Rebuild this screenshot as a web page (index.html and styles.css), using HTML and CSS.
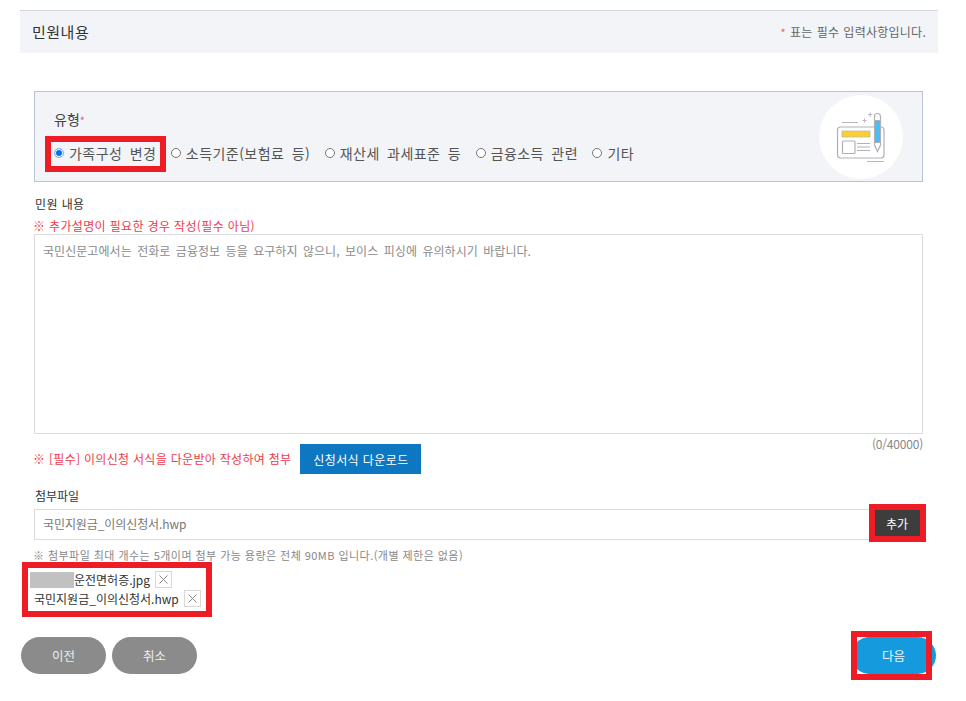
FILE: index.html
```html
<!DOCTYPE html>
<html lang="ko">
<head>
<meta charset="utf-8">
<title>민원내용</title>
<link rel="stylesheet" href="styles.css">
</head>
<body>
<div class="page">
  <header class="head">
    <h2 class="head-title">민원내용</h2>
    <p class="head-note"><span class="req">*</span> 표는 필수 입력사항입니다.</p>
  </header>
  <main class="content">
    <section class="type-box">
      <div class="type-main">
        <div class="type-label">유형<span class="req">*</span></div>
        <div class="radios">
          <label class="radio"><span class="dot on"></span>가족구성 변경</label>
          <label class="radio"><span class="dot"></span>소득기준(보험료 등)</label>
          <label class="radio"><span class="dot"></span>재산세 과세표준 등</label>
          <label class="radio"><span class="dot"></span>금융소득 관련</label>
          <label class="radio"><span class="dot"></span>기타</label>
        </div>
      </div>
      <div class="type-icon">
        <svg width="84" height="84" viewBox="819 95 84 84" fill="none">
          <path d="M842 122.500h16" stroke="#b5b8bd"/>
          <path d="M837.500 130a3 3 0 0 1 3-3h40.500a3 3 0 0 1 3 3v25a3 3 0 0 1-3 3h-40.500a3 3 0 0 1-3-3z" stroke="#aeb1b6" stroke-width="1.200"/>
          <rect x="842" y="131" width="28" height="6" fill="#fbcf33" stroke="#b8b6a8" stroke-width=".7"/>
          <rect x="842.500" y="141" width="12.500" height="12.500" rx="1" stroke="#aeb1b6" stroke-width="1.200"/>
          <path d="M857 143.500h13M857 147h13M857 150.500h13" stroke="#aeb1b6" stroke-width="1.100"/>
          <path d="M862.500 120.500h4M864.500 118.500v4M868 114.500h4.500M870.200 112.500v4.500" stroke="#b5b8bd"/>
          <path d="M874 116a3.500 3.500 0 0 1 7 0v29.500l-3.500 6.500-3.500-6.500z" fill="#fff"/>
          <rect x="874.500" y="120.500" width="6" height="22" fill="#4bbdf4"/>
          <path d="M874.500 119v-2.500a3 3 0 0 1 6 0V145l-3 6.500-3-6.500z" stroke="#aeb1b6" stroke-width="1.200"/>
          <path d="M874.500 120.500h6M874.500 142.500h6" stroke="#aeb1b6"/>
          <path d="M867 161.500h17" stroke="#b5b8bd"/>
        </svg>
      </div>
    </section>

    <div class="field-label complaint-label">민원 내용</div>
    <p class="warn warn-small">※ 추가설명이 필요한 경우 작성(필수 아님)</p>
    <div class="textarea">국민신문고에서는 전화로 금융정보 등을 요구하지 않으니, 보이스 피싱에 유의하시기 바랍니다.</div>
    <div class="counter">(0/40000)</div>

    <div class="download-row">
      <p class="warn">※ [필수] 이의신청 서식을 다운받아 작성하여 첨부</p>
      <button class="download-btn" type="button">신청서식 다운로드</button>
    </div>

    <div class="field-label attach-label">첨부파일</div>
    <div class="attach-row">
      <div class="attach-input">국민지원금_이의신청서.hwp</div>
      <button class="add-btn" type="button">추가</button>
    </div>
    <p class="hint">※ 첨부파일 최대 개수는 5개이며 첨부 가능 용량은 전체 90MB 입니다.(개별 제한은 없음)</p>

    <ul class="files">
      <li class="file file-masked"><span class="mask"></span><span class="file-name">운전면허증.jpg</span><button class="remove" type="button" aria-label="삭제"><svg width="15" height="15" viewBox="0 0 15 15"><path d="M3.500 3.500l8 8M11.500 3.500l-8 8" stroke="#8a8a8a" fill="none"/></svg></button></li>
      <li class="file"><span class="file-name">국민지원금_이의신청서.hwp</span><button class="remove" type="button" aria-label="삭제"><svg width="15" height="15" viewBox="0 0 15 15"><path d="M3.500 3.500l8 8M11.500 3.500l-8 8" stroke="#8a8a8a" fill="none"/></svg></button></li>
    </ul>
  </main>

  <footer class="actions">
    <div class="actions-left">
      <button class="pill grey" type="button">이전</button>
      <button class="pill grey" type="button">취소</button>
    </div>
    <button class="pill blue" type="button">다음</button>
  </footer>

  <div class="mark mark-radio"></div>
  <div class="mark mark-add"></div>
  <div class="mark mark-files"></div>
  <div class="mark mark-next"></div>
</div>
</body>
</html>
```

FILE: styles.css
```css
* { box-sizing: border-box; }
html, body { margin: 0; padding: 0; background: #fff; }
body {
  font-family: "Noto Sans CJK KR", "Noto Sans", sans-serif;
  color: #333;
  font-size: 13px;
  overflow: hidden;
}
p, h2, ul { margin: 0; padding: 0; }
button { font-family: inherit; border: 0; padding: 0; }

.page { position: relative; width: 966px; height: 701px; padding: 10px 28px 0 20px; }

.head {
  height: 43px;
  background: #f2f4f8;
  border-top: 1px solid #d5d8e0;
  display: flex;
  align-items: center;
  justify-content: space-between;
  padding: 0 12px 2px;
}
.head-title { font-size: 15px; font-weight: 400; color: #333; line-height: 1; letter-spacing: .5px; }
.head-note { font-size: 12px; color: #666; letter-spacing: .25px; word-spacing: .5px; }
.req { color: #e8606c; font-size: 11px; }

.content { padding: 38px 15px 0 14px; }

.type-box {
  height: 91px;
  background: #f2f4f8;
  border: 1px solid #b9c4d2;
  display: flex;
  justify-content: space-between;
  padding: 3px 19px 3px 19px;
}
.type-main { padding-top: 13px; }
.type-label { font-size: 14px; line-height: 22px; color: #444; }
.radios { display: flex; gap: 14.500px; margin-top: 12px; }
.radio { display: flex; align-items: center; gap: 5px; font-size: 14px; line-height: 20px; color: #555; letter-spacing: .45px; word-spacing: 3px; }
.dot { width: 10px; height: 10px; border-radius: 50%; border: 1px solid #777; background: #fff; }
.dot.on { border: 1px solid #8ab8ea; background: #0a6fe0; box-shadow: inset 0 0 0 1px #fff; }

.type-icon {
  width: 84px; height: 84px; border-radius: 50%; background: #fff;
}
.type-icon svg { display: block; }

.field-label { font-size: 12px; line-height: 16px; color: #333; padding-left: 1px; }
.complaint-label { margin-top: 14px; letter-spacing: .4px; }
.warn { color: #ee3b4a; font-size: 12px; line-height: 16px; letter-spacing: .3px; margin-left: -1px; }
.warn-small { margin-top: 6px; letter-spacing: .35px; }
.textarea {
  height: 200px;
  border: 1px solid #dcdcdc;
  background: #fff;
  padding: 7px 8px;
  font-size: 12px;
  line-height: 18px;
  color: #8b8b8b;
  letter-spacing: .05px;
  word-spacing: 2px;
}
.counter { text-align: right; font-size: 12px; line-height: 16px; color: #888; margin-top: 2px; letter-spacing: -.2px; }

.download-row { display: flex; align-items: center; gap: 9px; margin-top: -8px; }
.download-btn {
  width: 121px; height: 30px;
  background: #0d77c2;
  color: #fff;
  font-size: 12px;
  letter-spacing: .4px;
}

.attach-label { margin-top: 14px; }
.attach-row { display: flex; align-items: stretch; margin-top: 5px; height: 31px; }
.attach-input {
  flex: 1;
  border: 1px solid #dcdcdc;
  border-right: 0;
  padding: 0 8px;
  font-size: 12px;
  line-height: 28px;
  color: #777;
  letter-spacing: -.1px;
}
.add-btn { width: 52px; background: #3d3d3d; color: #fff; font-size: 12px; padding-bottom: 2px; }
.hint { margin-top: 7px; margin-left: -1px; font-size: 11px; line-height: 16px; color: #888; letter-spacing: .45px; }

.files { list-style: none; margin-top: 7px; margin-left: -4px; }
.file { display: flex; align-items: center; height: 19px; font-size: 12px; color: #333; }
.mask { width: 44px; height: 16px; background: #c1c1c1; }
.file:not(.file-masked) { padding-left: 4px; }
.file-name { white-space: nowrap; }
.remove {
  width: 17px; height: 17px; margin-left: 5px;
  background: #fff; border: 1px solid #d8d8d8;
  display: flex; align-items: center; justify-content: center;
}

.actions { display: flex; justify-content: space-between; margin-top: 29px; padding-left: 1px; padding-right: 2px; }
.actions-left { display: flex; gap: 6px; }
.pill { width: 85px; height: 37px; border-radius: 19px; color: #eee; font-size: 12.500px; }
.grey { background: #8b8b8b; }
.blue { background: #169ade; color: #e8f5fd; }

.mark { position: absolute; border: 6px solid #ee1c25; }
.mark-radio { left: 45px; top: 136px; width: 121px; height: 36px; }
.mark-add { left: 869px; top: 504px; width: 57px; height: 38px; }
.mark-files { left: 22px; top: 562px; width: 190px; height: 55px; }
.mark-next { left: 851px; top: 631px; width: 81px; height: 49px; }
```
